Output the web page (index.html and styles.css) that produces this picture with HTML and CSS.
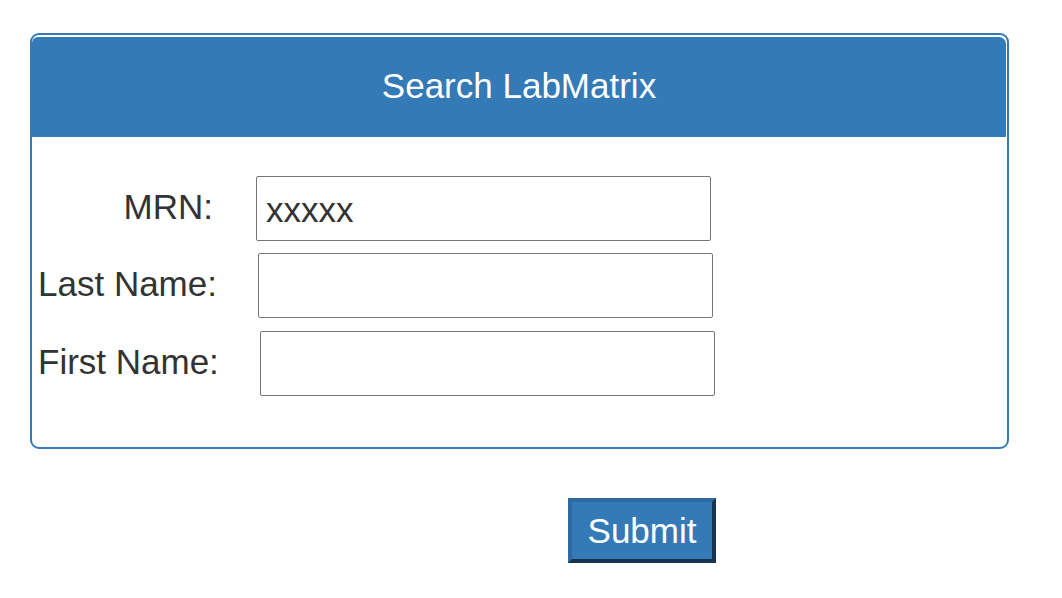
FILE: index.html
```html
<!DOCTYPE html>
<html>
<head>
<meta charset="utf-8">
<link rel="stylesheet" href="styles.css">
</head>
<body>
<div class="panel">
  <div class="panel-heading">Search LabMatrix</div>
  <div class="panel-body">
    <div class="row row-mrn">
      <label class="lbl">MRN:</label>
      <input class="field" type="text" value="xxxxx">
    </div>
    <div class="row row-last">
      <label class="lbl">Last Name:</label>
      <input class="field" type="text" value="">
    </div>
    <div class="row row-first">
      <label class="lbl">First Name:</label>
      <input class="field" type="text" value="">
    </div>
  </div>
</div>
<div class="actions">
  <button class="submit" type="button">Submit</button>
</div>
</body>
</html>
```

FILE: styles.css
```css
html, body {
  margin: 0;
  background: #ffffff;
}
body {
  padding: 33px 53px 0 30px;
  font-family: "Liberation Sans", Arial, sans-serif;
  font-size: 35px;
  color: #333333;
}
.panel {
  width: 975px;
  border: 2px solid #337ab7;
  border-radius: 9px;
  overflow: hidden;
  background: #fff;
}
.panel-heading {
  margin: 2px 1px 0 0;
  height: 100px;
  padding-bottom: 2px;
  box-sizing: border-box;
  background: #337ab7;
  color: #ffffff;
  display: flex;
  align-items: center;
  justify-content: center;
  border-top-right-radius: 7px;
  border-top-left-radius: 6px;
}
.panel-body {
  padding: 39px 0 51px 6px;
  display: flex;
  flex-direction: column;
  gap: 12px;
}
.row {
  display: flex;
  align-items: center;
}
.lbl {
  box-sizing: border-box;
  width: 179px;
  white-space: nowrap;
  text-align: right;
  flex: none;
  margin-right: 39px;
  line-height: 1;
  padding-bottom: 4px;
}
.row-mrn .lbl { padding-right: 4px; }
.row-last .lbl { padding-right: 1px; }
.row-last .field { margin-left: 2px; }
.row-first { margin-top: 1px; }
.row-first .field { margin-left: 4px; }
.field {
  box-sizing: border-box;
  width: 455px;
  height: 65px;
  border: 1px solid #767676;
  border-radius: 2px;
  padding: 2px 9px 0 9px;
  font-family: "Liberation Sans", Arial, sans-serif;
  font-size: 35px;
  color: #333333;
  background: #fff;
  outline: none;
}
.actions {
  margin-top: 49px;
  padding-left: 538px;
}
.submit {
  box-sizing: border-box;
  width: 148px;
  height: 65px;
  background: #337ab7;
  color: #ffffff;
  font-family: "Liberation Sans", Arial, sans-serif;
  font-size: 35px;
  border-style: solid;
  border-width: 4px;
  border-color: #2e6aa2 #173550 #173550 #2e6aa2;
  padding: 0;
  line-height: 1;
}
```
